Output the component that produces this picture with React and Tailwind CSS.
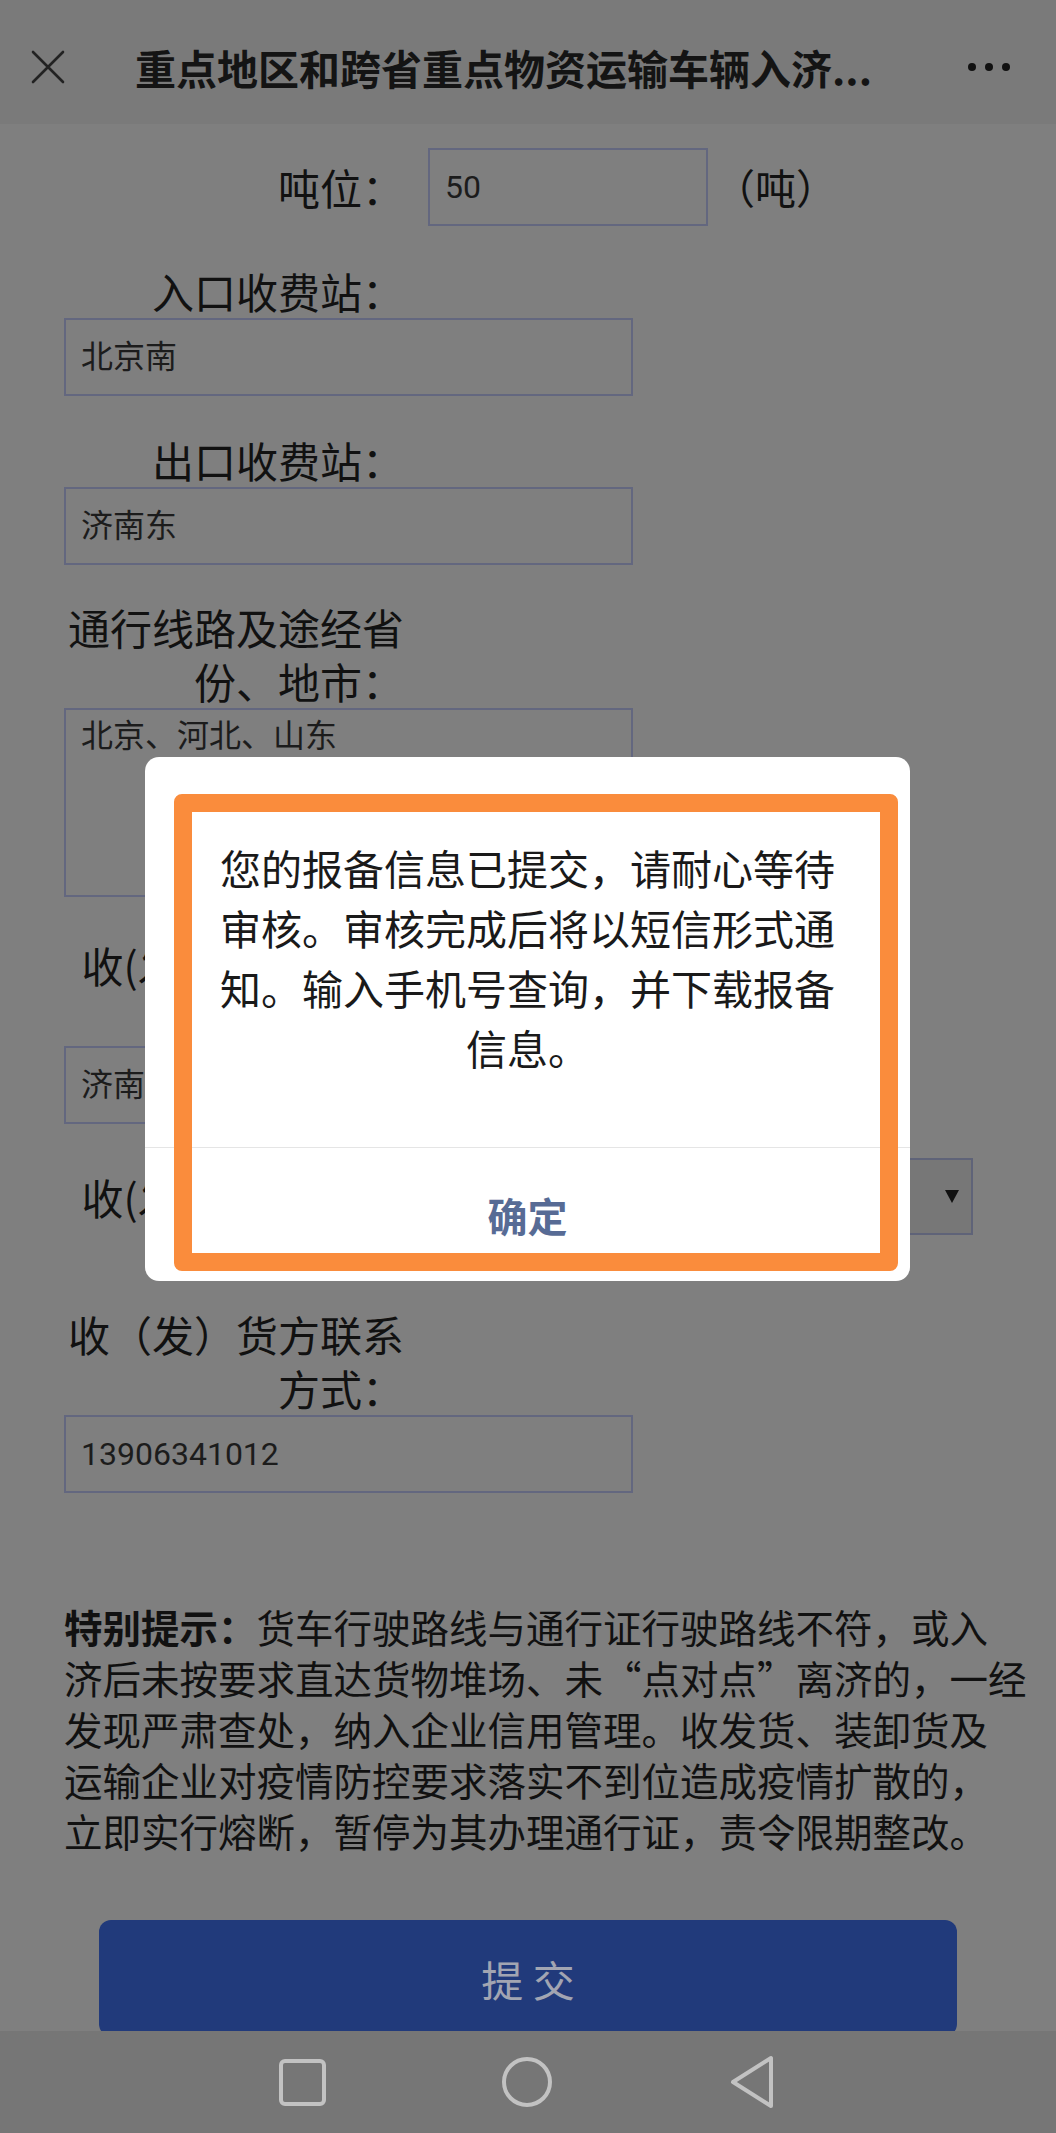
const inputCls =
  'h-[78px] w-[569px] border-2 border-[#63677f] pl-[15px] flex items-center text-[32px] text-[#1c1c1c] font-[Roboto,"Noto_Sans_CJK_SC",sans-serif]'

function Label({ children, className = '' }) {
  return (
    <div className={`w-[340px] text-right text-[42px] leading-[54px] text-[#111] ${className}`}>
      {children}
    </div>
  )
}

export default function App() {
  return (
    <div className='relative min-h-[2133px] overflow-hidden bg-[#7f7f7f] font-["Noto_Sans_CJK_SC",sans-serif] text-[#111]'>
      {/* Title bar */}
      <header className="flex h-[124px] items-center bg-[#7a7a7a] pt-[10px] pl-[31px] pr-[46px]">
        <svg width="34" height="34" viewBox="0 0 34 34" className="shrink-0">
          <path d="M2 2 L32 32 M32 2 L2 32" stroke="#222" strokeWidth="2.6" strokeLinecap="round" />
        </svg>
        <h1 className="ml-[70px] flex-1 whitespace-nowrap text-[41px] font-bold leading-none text-[#141414]">
          重点地区和跨省重点物资运输车辆入济...
        </h1>
        <div className="flex items-center gap-[9px]">
          <span className="block h-[8px] w-[8px] rounded-full bg-[#111]" />
          <span className="block h-[8px] w-[8px] rounded-full bg-[#111]" />
          <span className="block h-[8px] w-[8px] rounded-full bg-[#111]" />
        </div>
      </header>

      <main className="px-[64px]">
        {/* 吨位 */}
        <div className="mt-[24px] flex items-center">
          <Label>吨位：</Label>
          <div className={`${inputCls} ml-[24px] !w-[280px]`}>50</div>
          <span className="ml-[6px] text-[41px]">（吨）</span>
        </div>

        <Label className="mt-[38px]">入口收费站：</Label>
        <div className={inputCls}>北京南</div>

        <Label className="mt-[37px]">出口收费站：</Label>
        <div className={inputCls}>济南东</div>

        <Label className="mt-[35px]">通行线路及途经省份、地市：</Label>
        <div className={`${inputCls} !h-[189px] !items-start pt-[8px] leading-[36px]`}>北京、河北、山东</div>

        <Label className="mt-[41px]">收(发)货方详细地址：</Label>
        <div className={inputCls}>济南市</div>

        <div className="mt-[34px] flex items-center">
          <Label>收(发)货方类型：</Label>
          <div className="ml-[24px] flex h-[77px] w-[545px] items-center justify-end border-2 border-[#5f6378] bg-[#777] pr-[12px]">
            <svg width="14" height="13" viewBox="0 0 14 13">
              <polygon points="0,0 14,0 7,13" fill="#111" />
            </svg>
          </div>
        </div>

        <Label className="mt-[72px]">收（发）货方联系方式：</Label>
        <div className={inputCls}>13906341012</div>

        {/* Notice */}
        <div className="mt-[108px] whitespace-nowrap text-[38.5px] leading-[51px] text-[#111]">
          <div>
            <b className="font-bold">特别提示：</b>货车行驶路线与通行证行驶路线不符，或入
          </div>
          <div>济后未按要求直达货物堆场、未“点对点”离济的，一经</div>
          <div>发现严肃查处，纳入企业信用管理。收发货、装卸货及</div>
          <div>运输企业对疫情防控要求落实不到位造成疫情扩散的，</div>
          <div>立即实行熔断，暂停为其办理通行证，责令限期整改。</div>
        </div>
      </main>

      <div className="mx-[99px] mt-[64px] flex h-[116px] items-center justify-center rounded-[12px] bg-[#213a7b] text-[42px] text-[#a2a5b2]">
        提 交
      </div>

      {/* System navigation bar */}
      <nav className="absolute bottom-0 left-0 flex h-[102px] w-full items-center gap-[165px] bg-[#767676] pl-[272px]">
        <div className="flex w-[60px] justify-center">
          <svg width="47" height="47" viewBox="0 0 47 47">
            <rect x="2" y="2" width="43" height="43" rx="4" fill="none" stroke="#c2c2c2" strokeWidth="4" />
          </svg>
        </div>
        <div className="flex w-[60px] justify-center">
          <svg width="52" height="52" viewBox="0 0 52 52">
            <circle cx="26" cy="26" r="23" fill="none" stroke="#c2c2c2" strokeWidth="4" />
          </svg>
        </div>
        <div className="flex w-[60px] justify-center">
          <svg width="46" height="56" viewBox="0 0 46 56">
            <path d="M4 28 L42 4 L42 52 Z" fill="none" stroke="#c2c2c2" strokeWidth="4" strokeLinejoin="round" />
          </svg>
        </div>
      </nav>

      {/* Dialog */}
      <div className="absolute left-[145px] top-[757px] w-[765px] overflow-hidden rounded-[14px] bg-white">
        <div className="px-[40px] pt-[80px] pb-[70px] text-center text-[41px] leading-[60px] text-[#1a1a1a]">
          <div>您的报备信息已提交，请耐心等待</div>
          <div>审核。审核完成后将以短信形式通</div>
          <div>知。输入手机号查询，并下载报备</div>
          <div>信息。</div>
        </div>
        <div className="h-px bg-[#e5e5e5]" />
        <div className="flex h-[133px] items-center justify-center text-[40px] font-bold text-[#576b95]">
          确定
        </div>
        {/* orange highlight frame drawn over the dialog */}
        <div className="pointer-events-none absolute bottom-[10px] left-[29px] right-[12px] top-[37px] rounded-[8px] border-[18px] border-[#fa8c3c]" />
      </div>
    </div>
  )
}
